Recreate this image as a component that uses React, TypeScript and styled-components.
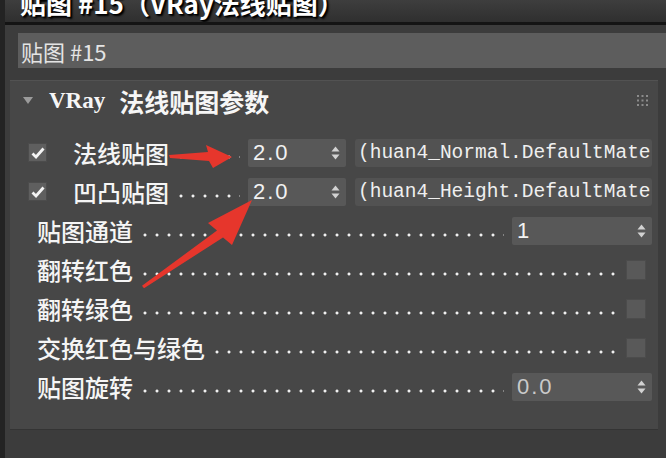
import styled, { createGlobalStyle } from 'styled-components';

const GlobalStyle = createGlobalStyle`
  html, body {
    margin: 0;
    padding: 0;
    background: #3c3c3c;
    overflow: hidden;
  }
  body {
    width: 666px;
    height: 458px;
    font-family: "Noto Sans CJK SC", "Noto Sans", sans-serif;
  }
`;

const checkRows = [
  { label: '法线贴图', value: '2.0', map: '(huan4_Normal.DefaultMaterial)' },
  { label: '凹凸贴图', value: '2.0', map: '(huan4_Height.DefaultMaterial)' },
];

type Param =
  | { label: string; kind: 'spin'; value: string; dim?: boolean }
  | { label: string; kind: 'check' };

const params: Param[] = [
  { label: '贴图通道', kind: 'spin', value: '1' },
  { label: '翻转红色', kind: 'check' },
  { label: '翻转绿色', kind: 'check' },
  { label: '交换红色与绿色', kind: 'check' },
  { label: '贴图旋转', kind: 'spin', value: '0.0', dim: true },
];

const SpinArrows = () => (
  <Arrows>
    <svg width="9" height="14" viewBox="0 0 9 14">
      <path d="M4.5 0.5 L8.5 5.5 L0.5 5.5 Z" fill="#d2d2d2" />
      <path d="M4.5 13.5 L8.5 8.5 L0.5 8.5 Z" fill="#d2d2d2" />
    </svg>
  </Arrows>
);

const Spinner = ({ value, wide, dim }: { value: string; wide?: boolean; dim?: boolean }) => (
  <SpinBox wide={wide}>
    <SpinValue dim={dim}>{value}</SpinValue>
    <SpinArrows />
  </SpinBox>
);

const App = () => {
  return (
    <Frame>
      <GlobalStyle />
      <Window>
        <TitleBar>
          <TitleText>贴图 #15（VRay法线贴图）</TitleText>
        </TitleBar>
        <NameField>贴图 #15</NameField>

        <Rollout>
          <RolloutHeader>
            <Triangle />
            <HeaderText>
              <Latin>VRay</Latin>
              <span>法线贴图参数</span>
            </HeaderText>
            <Grip>
              <svg width="13" height="13" viewBox="0 0 13 13">
                {[0, 1, 2].map((r) =>
                  [0, 1, 2].map((c) => (
                    <rect key={`${r}-${c}`} x={1 + c * 4.5} y={1 + r * 4.5} width="2" height="2" fill="#8c8c8c" />
                  ))
                )}
              </svg>
            </Grip>
          </RolloutHeader>

          <Rows>
            {checkRows.map((row) => (
              <CheckRow key={row.label}>
                <Check checked>
                  <svg width="14" height="12" viewBox="0 0 14 12">
                    <path d="M1.5 6.5 L5 10 L12.5 1.5" fill="none" stroke="#f4f4f4" strokeWidth="2.8" />
                  </svg>
                </Check>
                <Label indent>{row.label}</Label>
                <Leader />
                <Spinner value={row.value} />
                <MapButton>{row.map}</MapButton>
              </CheckRow>
            ))}

            {params.map((p) => (
              <PlainRow key={p.label}>
                <Label>{p.label}</Label>
                <Leader />
                {p.kind === 'spin' ? (
                  <Spinner value={p.value} wide dim={p.dim} />
                ) : (
                  <Check />
                )}
              </PlainRow>
            ))}
          </Rows>
        </Rollout>
      </Window>

      <Overlay width="666" height="458" viewBox="0 0 666 458">
        <polygon
          points="169,155 208,152 206,145 232,157 213,168 209,161 170,158"
          fill="#e6362c"
        />
        <polygon
          points="142,285.8 217,230.5 208,223 252,200 232,245 223,237.5 144,288.2"
          fill="#e6362c"
        />
      </Overlay>
    </Frame>
  );
};

export default App;

const Frame = styled.div`
  position: relative;
  width: 666px;
  height: 458px;
  overflow: hidden;
`;

const Window = styled.div`
  box-sizing: border-box;
  width: 666px;
  height: 458px;
  background: #3c3c3c;
  border-left: 5px solid #232323;
  display: flex;
  flex-direction: column;
`;

const TitleBar = styled.div`
  box-sizing: border-box;
  height: 25px;
  padding: 0 0 6px 15px;
  background: linear-gradient(#3e3e3e, #2f2f2f);
  border-bottom: 3px solid #141414;
  display: flex;
  align-items: flex-end;
  overflow: hidden;
`;

const TitleText = styled.div`
  font-size: 26px;
  line-height: 26px;
  font-weight: 700;
  color: #ffffff;
  white-space: nowrap;
  text-shadow: 1px 1px 1px #000, 2px 2px 2px #000;
`;

const NameField = styled.div`
  box-sizing: border-box;
  margin: 8px 0 0 13px;
  height: 35px;
  padding-left: 3px;
  background: #5d5d5d;
  color: #e4e4e4;
  font-size: 22px;
  display: flex;
  align-items: center;
  white-space: pre;
`;

const Rollout = styled.div`
  box-sizing: border-box;
  margin: 12px 8px 0 5px;
  height: 349px;
  padding-right: 6px;
  background: #474747;
  border-top: 1px solid #525252;
  box-shadow: 0 1px 0 #343434;
`;

const RolloutHeader = styled.div`
  height: 39px;
  padding-left: 13px;
  display: flex;
  align-items: center;
`;

const Triangle = styled.div`
  width: 0;
  height: 0;
  border-left: 5px solid transparent;
  border-right: 5px solid transparent;
  border-top: 7px solid #9b9b9b;
`;

const HeaderText = styled.div`
  margin-left: 16px;
  display: flex;
  align-items: center;
  gap: 14px;
  font-size: 25px;
  font-weight: 700;
  color: #f6f6f6;
`;

const Latin = styled.span`
  font-family: "Liberation Serif", serif;
  font-size: 23px;
`;

const Grip = styled.div`
  margin-left: auto;
  margin-right: 3px;
  display: flex;
`;

const Rows = styled.div`
  padding-top: 13px;
  display: flex;
  flex-direction: column;
`;

const CheckRow = styled.div`
  height: 39px;
  padding-left: 18px;
  display: flex;
  align-items: center;
`;

const PlainRow = styled.div`
  height: 39px;
  padding-left: 27px;
  display: flex;
  align-items: center;
`;

const Check = styled.div<{ checked?: boolean }>`
  box-sizing: border-box;
  width: ${({ checked }) => (checked ? '19px' : '20px')};
  height: ${({ checked }) => (checked ? '19px' : '20px')};
  margin-right: ${({ checked }) => (checked ? '0' : '6px')};
  background: ${({ checked }) => (checked ? '#5f5f5f' : '#595959')};
  border: 1px solid #4c4c4c;
  display: flex;
  align-items: center;
  justify-content: center;
  flex-shrink: 0;
`;

const Label = styled.div<{ indent?: boolean }>`
  margin-left: ${({ indent }) => (indent ? '26px' : '0')};
  font-size: 24px;
  font-weight: 500;
  line-height: 30px;
  color: #f5f5f5;
  white-space: nowrap;
`;

const Leader = styled.div`
  flex: 1;
  align-self: center;
  height: 4px;
  margin: 8px 8px 0 6px;
  background-image: radial-gradient(circle, #f0f0f0 1.2px, transparent 1.8px);
  background-size: 12px 4px;
  background-repeat: repeat-x;
  background-position: left center;
`;

const SpinBox = styled.div<{ wide?: boolean }>`
  box-sizing: border-box;
  width: ${({ wide }) => (wide ? '140px' : '98px')};
  height: 28px;
  padding-left: 5px;
  background: #585858;
  border-radius: 2px;
  display: flex;
  align-items: center;
  flex-shrink: 0;
`;

const SpinValue = styled.div<{ dim?: boolean }>`
  flex: 1;
  font-family: "Liberation Sans", sans-serif;
  font-size: 22px;
  letter-spacing: 2px;
  color: ${({ dim }) => (dim ? '#cacaca' : '#f2f2f2')};
`;

const Arrows = styled.div`
  margin-right: 6px;
  display: flex;
`;

const MapButton = styled.div`
  box-sizing: border-box;
  width: 297px;
  height: 28px;
  margin-left: 9px;
  padding-left: 3px;
  background: #525252;
  border-radius: 3px;
  font-family: "Liberation Mono", monospace;
  font-size: 19.5px;
  color: #efefef;
  white-space: nowrap;
  overflow: hidden;
  display: flex;
  align-items: center;
  flex-shrink: 0;
`;

const Overlay = styled.svg`
  position: absolute;
  top: 0;
  left: 0;
  pointer-events: none;
`;
